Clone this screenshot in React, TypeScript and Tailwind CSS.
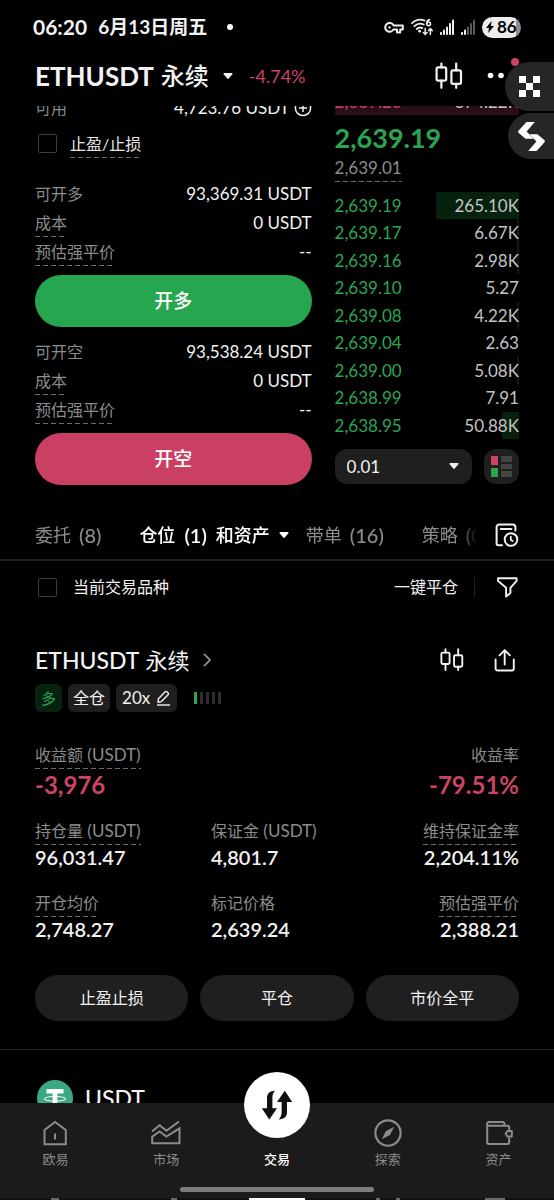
import { useState } from "react";
import type { ReactNode } from "react";
import clsx from "clsx";

interface Bid {
  price: string;
  size: string;
  depth: number;
}

const bids: Bid[] = [
  { price: "2,639.19", size: "265.10K", depth: 45 },
  { price: "2,639.17", size: "6.67K", depth: 1 },
  { price: "2,639.16", size: "2.98K", depth: 1 },
  { price: "2,639.10", size: "5.27", depth: 0 },
  { price: "2,639.08", size: "4.22K", depth: 1 },
  { price: "2,639.04", size: "2.63", depth: 0 },
  { price: "2,639.00", size: "5.08K", depth: 1 },
  { price: "2,638.99", size: "7.91", depth: 0 },
  { price: "2,638.95", size: "50.88K", depth: 9 },
];

function Caret({ className }: { className?: string }) {
  return (
    <svg viewBox="0 0 10 6" className={clsx("h-1.5 w-2.5 shrink-0 fill-current", className)} aria-hidden="true">
      <path d="M1.2 0h7.6c.7 0 1 .7.6 1.2L5.7 5.6a.9.9 0 0 1-1.4 0L.6 1.2C.2.7.5 0 1.2 0Z" />
    </svg>
  );
}

function CandlesIcon({ className }: { className?: string }) {
  return (
    <svg viewBox="0 0 28 28" className={className} fill="none" stroke="currentColor" strokeWidth="2.2" strokeLinecap="round" aria-hidden="true">
      <rect x="1.6" y="5.4" width="9.6" height="13.2" rx="1.6" />
      <path d="M6.4 1.5v4M6.4 18.6v7.2" />
      <rect x="16.4" y="8.4" width="9.6" height="13.4" rx="1.6" />
      <path d="M21.2 1.5v7M21.2 21.8v4" />
    </svg>
  );
}

/* Label with the dashed "tap for explanation" underline */
function Term({ children, plain, className }: { children: ReactNode; plain?: boolean; className?: string }) {
  return (
    <span
      className={clsx(
        "inline-block whitespace-nowrap pb-0.5 text-base leading-6",
        !plain &&
          "bg-[linear-gradient(90deg,#6c6c6c_5px,transparent_5px)] bg-[length:8px_1px] bg-[position:left_bottom] bg-repeat-x",
        className ?? "text-[#8c8c8c]",
      )}
    >
      {children}
    </span>
  );
}

function StatusBar() {
  return (
    <div className="flex h-[54px] items-center px-[33px] font-bold">
      <span className="text-[21px]">06:20</span>
      <span className="ml-[11px] text-[19px]">6月13日周五</span>
      <span className="ml-5 size-1.5 rounded-full bg-white" />
      <div className="ml-auto flex items-center gap-[7px]">
        {/* vpn key */}
        <svg viewBox="0 0 20 13" className="h-[13px] w-5" fill="none" stroke="#eee" strokeWidth="2" strokeLinejoin="round" aria-hidden="true">
          <path d="M9.5 4.4A4.4 4.4 0 1 0 9.5 8.4H13v3h3.2v-3h2.6v-4Z" />
          <circle cx="5.6" cy="6.4" r="1.2" fill="#eee" stroke="none" />
        </svg>
        {/* wifi 6 */}
        <svg viewBox="0 0 22 18" className="h-[18px] w-[22px]" fill="none" stroke="#eee" strokeWidth="1.8" strokeLinecap="round" aria-hidden="true">
          <path d="M1 5.2C4.300 1.800 9.500.8 13.500 2.600M3.400 8.200c2.500-2.500 6.200-3.200 9.300-1.700M5.800 11c1.500-1.500 3.700-1.900 5.500-.9" />
          <circle cx="8.600" cy="13.200" r="1.400" fill="#eee" stroke="none" />
          <path d="M18.400 1.600c-1.800.6-2.700 2-2.700 3.800" />
          <circle cx="17.600" cy="5.800" r="1.900" strokeWidth="1.500" />
          <path d="M14.200 10.500v5.500M12.400 14.500l1.800 1.900 1.800-1.900M19.400 16.400v-5.500M17.600 12.600l1.800-1.900 1.800 1.900" strokeWidth="1.500" />
        </svg>
        <svg viewBox="0 0 14 16" className="h-4 w-3.5" fill="#eee" aria-hidden="true">
          <rect y="13" width="2" height="3" rx=".8" />
          <rect x="3" y="10.500" width="2" height="5.500" rx=".8" />
          <rect x="6" y="7.500" width="2" height="8.500" rx=".8" />
          <rect x="9" y="4" width="2" height="12" rx=".8" />
          <rect x="12" y="0.500" width="2" height="15.500" rx=".8" />
        </svg>
        <svg viewBox="0 0 14 16" className="h-4 w-3.5" fill="#5c5c5c" aria-hidden="true">
          <rect y="13" width="2" height="3" rx=".8" fill="#eee" />
          <rect x="3" y="10.500" width="2" height="5.500" rx=".8" fill="#eee" />
          <rect x="6" y="7.500" width="2" height="8.500" rx=".8" />
          <rect x="9" y="4" width="2" height="12" rx=".8" />
          <rect x="12" y="0.500" width="2" height="15.500" rx=".8" />
        </svg>
        <span className="flex h-[21px] w-[39px] items-center gap-[3px] rounded-full bg-[linear-gradient(90deg,#ececec_86%,#8e8e8e_86%)] pl-1 text-black">
          <svg viewBox="0 0 8 12" className="h-3 w-2 shrink-0 fill-black" aria-hidden="true">
            <path d="M5.600 0 0 6.900h3L2.200 12 8 4.900H4.900Z" />
          </svg>
          <span className="text-[17px] leading-5">86</span>
        </span>
      </div>
    </div>
  );
}

function Header() {
  return (
    <header className="shrink-0">
      <StatusBar />
      <div className="flex h-[52px] items-center px-[35px] pb-2">
        <button className="flex items-center gap-[7px] whitespace-nowrap">
          <span className="text-[26px] font-bold">ETHUSDT</span>
          <span className="text-2xl font-medium">永续</span>
          <Caret className="ml-[7px]" />
        </button>
        <span className="ml-4 text-lg text-[#cb4467]">-4.74%</span>
        <button aria-label="K线" className="ml-auto">
          <CandlesIcon className="size-7" />
        </button>
        <button aria-label="更多" className="relative ml-6">
          <svg viewBox="0 0 32 28" className="h-7 w-8 fill-white" aria-hidden="true">
            <circle cx="3.500" cy="13.500" r="2.800" />
            <circle cx="14" cy="13.500" r="2.800" />
            <circle cx="24.500" cy="13.500" r="2.800" />
          </svg>
          <span className="absolute -top-1 right-0 size-2 rounded-full bg-[#cb4467]" />
        </button>
      </div>
    </header>
  );
}

/* Max size / cost / liquidation price rows plus the order button below them */
function OrderSide({ title, max, action, color }: { title: string; max: string; action: string; color: string }) {
  return (
    <section className="flex flex-col">
      <div className="flex h-[29px] items-start justify-between">
        <Term plain>{title}</Term>
        <span className="text-[17px] leading-6">{max}</span>
      </div>
      <div className="flex h-[29px] items-start justify-between">
        <Term>成本</Term>
        <span className="text-[17px] leading-6">0 USDT</span>
      </div>
      <div className="flex h-[29px] items-start justify-between">
        <Term>预估强平价</Term>
        <span className="text-[17px] leading-6">--</span>
      </div>
      <button className={clsx("mt-1.5 h-[52px] rounded-full text-[19px] font-medium text-white", color)}>{action}</button>
    </section>
  );
}

function OrderForm() {
  return (
    <div className="flex flex-col pt-2">
      <div className="flex items-center justify-between text-[17px] leading-6">
        <span className="text-base leading-6 text-[#8c8c8c]">可用</span>
        <span className="flex items-center gap-1">
          4,723.76 USDT
          <svg viewBox="0 0 18 18" className="size-[18px]" fill="none" stroke="currentColor" strokeWidth="1.5" aria-hidden="true">
            <circle cx="9" cy="9" r="7.600" />
            <path d="M9 5v8M5 9h8" />
          </svg>
        </span>
      </div>
      <label className="mt-3 flex items-start gap-[13px] pl-[3px]">
        <input type="checkbox" className="mt-0.5 size-[19px] appearance-none rounded-xs border border-[#3d3d3d] checked:bg-[#3d3d3d]" />
        <Term className="text-[#e6e6e6]">止盈/止损</Term>
      </label>
      <div className="mt-6 flex flex-col gap-[13px]">
        <OrderSide title="可开多" max="93,369.31 USDT" action="开多" color="bg-[#27a650]" />
        <OrderSide title="可开空" max="93,538.24 USDT" action="开空" color="bg-[#ca3f64]" />
      </div>
    </div>
  );
}

function OrderBook() {
  return (
    <div className="flex flex-col text-[17px]">
      <div className="flex h-[27px] items-center justify-between bg-[#2b0d17]">
        <span className="text-[#cb4467]">2,639.20</span>
        <span className="text-[#c4c4c4]">874.22K</span>
      </div>
      <div className="mt-[7px] text-[27px] font-bold leading-8 text-[#2aa653]">2,639.19</div>
      <div className="mt-0.5 flex">
        <Term className="text-[#8c8c8c]">
          <span className="text-[17px]">2,639.01</span>
        </Term>
      </div>
      <ul className="mt-2.5 grid h-[247px] grid-rows-9">
        {bids.map((bid) => (
          <li key={bid.price} className="relative flex items-center justify-between">
            <span className="absolute inset-y-0 right-0 bg-[#07210f]" style={{ width: `${bid.depth}%` }} />
            <span className="text-[#2aa653]">{bid.price}</span>
            <span className="relative text-[#c4c4c4]">{bid.size}</span>
          </li>
        ))}
      </ul>
      <div className="mt-2.5 flex gap-3">
        <div className="relative flex-1">
          <select aria-label="价格精度" className="h-[35px] w-full appearance-none rounded-xl bg-[#1f1f1f] px-3 text-[17px]">
            <option>0.01</option>
            <option>0.1</option>
            <option>1</option>
          </select>
          <Caret className="pointer-events-none absolute right-[13px] top-3.5" />
        </div>
        <button aria-label="盘口显示" className="flex size-[35px] items-center justify-center rounded-xl bg-[#1f1f1f]">
          <svg viewBox="0 0 21 21" className="size-[21px]" aria-hidden="true">
            <path fill="#cb4467" d="M0 0h7v9H0z" />
            <path fill="#2aa653" d="M0 12h7v9H0z" />
            <path fill="#444" d="M10 0h11v6H10zM10 8h11v5H10zM10 15h11v6H10z" />
          </svg>
        </button>
      </div>
    </div>
  );
}

function Tabs() {
  return (
    <div className="mt-[25px] flex h-[51px] items-center border-b-2 border-[#1f1f1f] px-[35px]">
      <div className="flex min-w-0 flex-1 overflow-hidden whitespace-nowrap text-lg text-[#8c8c8c] [mask-image:linear-gradient(90deg,#000_96%,transparent)]">
        <button className="mr-[38px] flex shrink-0 items-center gap-2">
          委托 <span className="text-xl font-medium">(8)</span>
        </button>
        <button className="mr-[17px] flex shrink-0 items-center gap-[9px] font-medium text-white">
          仓位 <span className="text-xl font-semibold">(1)</span> 和资产
          <Caret />
        </button>
        <button className="mr-[38px] flex shrink-0 items-center gap-2">
          带单 <span className="text-xl font-medium">(16)</span>
        </button>
        <button className="flex shrink-0 items-center gap-2">
          策略 <span className="text-xl font-medium">(0)</span>
        </button>
      </div>
      <button aria-label="历史记录" className="ml-[18px]">
        <svg viewBox="0 0 24 24" className="size-6" fill="none" stroke="currentColor" strokeWidth="2" strokeLinecap="round" strokeLinejoin="round" aria-hidden="true">
          <path d="M7 22.200H3.200a1.600 1.600 0 0 1-1.600-1.600V4A2.600 2.600 0 0 1 4.200 1.400h13.600A2.600 2.600 0 0 1 20.400 4v3.600" />
          <path d="M5.800 6h10.600" />
          <circle cx="16" cy="16.500" r="6.300" />
          <path d="M15.800 13.500v3.400l2 1.100" strokeWidth="1.700" />
        </svg>
      </button>
    </div>
  );
}

function FilterRow() {
  const [onlyCurrent, setOnlyCurrent] = useState(false);
  return (
    <div className="flex h-[52px] items-center pl-[38px] pr-[35px] text-base">
      <label className="flex items-center gap-4">
        <input
          type="checkbox"
          checked={onlyCurrent}
          onChange={(e) => setOnlyCurrent(e.target.checked)}
          className="size-[19px] appearance-none rounded-xs border border-[#3d3d3d] checked:bg-[#3d3d3d]"
        />
        当前交易品种
      </label>
      <button className="ml-auto">一键平仓</button>
      <span className="ml-4 h-5 w-px bg-[#222]" />
      <button aria-label="筛选" className="ml-5">
        <svg viewBox="0 0 24 24" className="size-6" fill="none" stroke="currentColor" strokeWidth="1.900" strokeLinejoin="round" aria-hidden="true">
          <path d="M3 3.300h18.600v2.600l-6.200 6.900v5.300l-4.300 3.300v-8.600L3 5.900Z" />
        </svg>
      </button>
    </div>
  );
}

function Stat({ label, unit, value, plain, right, large }: { label: string; unit?: boolean; value: string; plain?: boolean; right?: boolean; large?: boolean }) {
  return (
    <div className={clsx("flex flex-col", right ? "items-end" : "items-start")}>
      <Term plain={plain}>
        {label}
        {unit && <span className="text-[17px]"> (USDT)</span>}
      </Term>
      <span className={large ? "text-2xl font-bold leading-8 text-[#cb4467]" : "text-xl font-semibold leading-6"}>{value}</span>
    </div>
  );
}

function PositionCard() {
  return (
    <article className="px-[35px] pt-[31px]">
      <div className="flex h-8 items-center pr-[3px]">
        <button className="flex items-center gap-1.5 whitespace-nowrap">
          <span className="text-[23px] font-medium">ETHUSDT</span>
          <span className="text-[22px]">永续</span>
          <svg viewBox="0 0 8 14" className="ml-2 h-3.5 w-2" fill="none" stroke="#999" strokeWidth="1.700" aria-hidden="true">
            <path d="m1 1 6 6-6 6" />
          </svg>
        </button>
        <button aria-label="K线" className="ml-auto">
          <CandlesIcon className="size-6" />
        </button>
        <button aria-label="分享" className="ml-[30px]">
          <svg viewBox="0 0 22 24" className="h-6 w-[22px]" fill="none" stroke="currentColor" strokeWidth="1.900" strokeLinecap="round" strokeLinejoin="round" aria-hidden="true">
            <path d="M1.600 11.500v9a2 2 0 0 0 2 2h14.200a2 2 0 0 0 2-2v-9" />
            <path d="M10.700 16.500V2.200M5.500 7.300l5.200-5.200 5.200 5.200" />
          </svg>
        </button>
      </div>
      <div className="mt-2 flex items-center text-base leading-7">
        <span className="rounded-md bg-[#07210f] px-1.5 text-[15px] leading-7 text-[#2aa653]">多</span>
        <span className="ml-1.5 rounded-md bg-[#1f1f1f] px-[5px]">全仓</span>
        <button className="ml-1.5 flex items-center gap-1.5 rounded-md bg-[#1f1f1f] px-1.5 text-[17px] leading-7">
          20x
          <svg viewBox="0 0 15 16" className="h-4 w-[15px]" fill="none" stroke="currentColor" strokeWidth="1.400" strokeLinejoin="round" aria-hidden="true">
            <path d="M2 12.200 2.400 8.800 9.200 1.800a1.200 1.200 0 0 1 1.700 0l1.200 1.200a1.200 1.200 0 0 1 0 1.700L5.400 11.600Z" />
            <path d="M1 15h13" />
          </svg>
        </button>
        <span className="ml-[17px] flex gap-[3px]" role="img" aria-label="风险等级">
          <i className="h-3 w-[3px] bg-[#2aa653]" />
          <i className="h-3 w-[3px] bg-[#2e2e2e]" />
          <i className="h-3 w-[3px] bg-[#2e2e2e]" />
          <i className="h-3 w-[3px] bg-[#2e2e2e]" />
          <i className="h-3 w-[3px] bg-[#2e2e2e]" />
        </span>
      </div>
      <div className="mt-[31px] flex justify-between">
        <Stat large label="收益额" unit value="-3,976" />
        <Stat large plain right label="收益率" value="-79.51%" />
      </div>
      <div className="mt-[18px] grid grid-cols-[4fr_4fr_3fr] gap-y-[22px]">
        <Stat label="持仓量" unit value="96,031.47" />
        <Stat plain label="保证金" unit value="4,801.7" />
        <Stat right label="维持保证金率" value="2,204.11%" />
        <Stat label="开仓均价" value="2,748.27" />
        <Stat plain label="标记价格" value="2,639.24" />
        <Stat right label="预估强平价" value="2,388.21" />
      </div>
      <div className="mt-[34px] grid grid-cols-3 gap-3 text-base">
        <button className="h-[46px] rounded-full bg-[#1f1f1f]">止盈止损</button>
        <button className="h-[46px] rounded-full bg-[#1f1f1f]">平仓</button>
        <button className="h-[46px] rounded-full bg-[#1f1f1f]">市价全平</button>
      </div>
    </article>
  );
}

function AssetRow() {
  return (
    <div className="mt-7 flex items-center gap-3 border-t border-[#1f1f1f] px-[37px] pt-[30px] text-[23px] font-medium">
      <svg viewBox="0 0 36 36" className="size-9" aria-hidden="true">
        <circle cx="18" cy="18" r="18" fill="#3aa882" />
        <path fill="#fff" d="M9.500 9h17v4.600h-6.100V28h-4.800V13.600H9.500z" />
        <ellipse cx="18" cy="18.800" rx="10.800" ry="2.300" fill="none" stroke="#fff" strokeWidth="1" />
      </svg>
      USDT
    </div>
  );
}

function NavItem({ label, active, children }: { label: string; active?: boolean; children: ReactNode }) {
  return (
    <a href="#" className={clsx("relative flex flex-col items-center pt-4", active ? "font-medium text-white" : "text-[#8c8c8c]")}>
      <span className="flex h-7 items-center">{children}</span>
      <span className="mt-0.5 text-[13px] leading-5">{label}</span>
    </a>
  );
}

function BottomNav() {
  return (
    <nav className="flex h-[97px] shrink-0 flex-col bg-[#1b1b1b]">
      <div className="grid grid-cols-5">
        <NavItem label="欧易">
          <svg viewBox="0 0 26 26" className="size-[26px]" fill="none" stroke="currentColor" strokeWidth="2" aria-hidden="true">
            <path d="M2.500 10 13 2l10.800 8v14.200H2.500Z" />
            <path d="M13 13.500v6" />
          </svg>
        </NavItem>
        <NavItem label="市场">
          <svg viewBox="0 0 30 26" className="h-[26px] w-[30px]" fill="none" stroke="currentColor" strokeWidth="2" aria-hidden="true">
            <path d="M1 11.500 8.600 5.200l6.800 5.600L28 1.500" />
            <path d="M1.200 23.300v-6.500l7.400-5.400 6.800 5.200L28.500 8.300v15Z" />
          </svg>
        </NavItem>
        <NavItem label="交易" active>
          <span className="absolute -top-[31px] left-1/2 flex size-[66px] -translate-x-1/2 items-center justify-center rounded-full bg-white">
            <svg viewBox="0 0 32 30" className="h-[30px] w-8 fill-[#111]" aria-hidden="true">
              <path d="M14 .8C8.800 1 6 3.600 6 8v10.200H.8L8.300 29.500 16 18.200h-4.600V8.200C11.400 5 12 3 14 .8Z" />
              <path d="M17.800 29.500c5.200-.2 8.200-2.800 8.200-7.200V12.100h5.200L23.800.8 16 12.100h4.600v10c0 3.200-.8 5.200-2.800 7.400Z" />
            </svg>
          </span>
        </NavItem>
        <NavItem label="探索">
          <svg viewBox="0 0 28 28" className="size-7" fill="none" stroke="currentColor" strokeWidth="2.200" aria-hidden="true">
            <circle cx="14" cy="14" r="12.600" />
            <path d="m20.200 7.800-4.200 8.200-8.200 4.200L12 12Z" fill="currentColor" stroke="none" />
          </svg>
        </NavItem>
        <NavItem label="资产">
          <svg viewBox="0 0 28 26" className="h-[26px] w-7" fill="none" stroke="currentColor" strokeWidth="2" strokeLinejoin="round" aria-hidden="true">
            <path d="M24.200 10V7.300a1.600 1.600 0 0 0-1.600-1.600H2.200v16.500a1.800 1.800 0 0 0 1.800 1.800h18.400a1.800 1.800 0 0 0 1.800-1.800V17.500" />
            <path d="M2.200 5.700V3.600c0-1 .7-1.600 1.600-1.600h13.900c1 0 1.700.7 1.700 1.600v2.100" />
            <path d="M26.800 11h-4.300l-1.900 2.800 1.900 2.800h4.300Z" />
          </svg>
        </NavItem>
      </div>
      <div className="mx-auto mt-[18px] h-[5px] w-[194px] shrink-0 rounded-full bg-[#7b7b7b]" />
      <div className="mt-auto grid h-0.5 grid-cols-5 justify-items-center bg-[#111]">
        <span className="w-2 bg-[#6a6a6a]" />
        <span className="ml-4 w-1.5 bg-[#6a6a6a]" />
        <span className="w-14 bg-white" />
        <span className="w-6 border-x-4 border-[#6a6a6a]" />
        <span className="mr-2 w-5 bg-[#6a6a6a]" />
      </div>
    </nav>
  );
}

/* Shortcuts docked to the screen edge */
function EdgeDock() {
  return (
    <div className="absolute right-0 top-[62px] flex flex-col items-end gap-0.5">
      <button aria-label="欧易" className="flex h-[49px] w-[49px] items-center rounded-l-full bg-[#262626] pl-3.5">
        <svg viewBox="0 0 21 21" className="size-[21px] fill-white" aria-hidden="true">
          <path d="M0 0h7v7H0zM14 0h7v7h-7zM7 7h7v7H7zM0 14h7v7H0zM14 14h7v7h-7z" />
        </svg>
      </button>
      <button aria-label="Bitget" className="flex h-[46px] w-[46px] items-center rounded-l-full bg-[#262626] pl-2.5">
        <svg viewBox="0 0 27 29" className="h-[29px] w-[27px] fill-white" aria-hidden="true">
          <path d="M8.500 0h8.300L8.600 9.600l7 7.200H7.600L.7 10.900a1.600 1.600 0 0 1 0-2.300Z" />
          <path d="M18.500 29h-8.300l8.200-9.600-7-7.200h8l6.900 5.900a1.600 1.600 0 0 1 0 2.300Z" />
        </svg>
      </button>
    </div>
  );
}

export default function App() {
  return (
    <div className="relative flex h-screen flex-col overflow-hidden bg-black font-['Lato','Noto_Sans_CJK_SC',sans-serif] text-[#f2f2f2]">
      <Header />
      <main className="min-h-0 flex-1 overflow-hidden">
        <div className="-mt-[18px] grid grid-cols-[3fr_2fr] gap-[23px] px-[35px]">
          <OrderForm />
          <OrderBook />
        </div>
        <Tabs />
        <FilterRow />
        <PositionCard />
        <AssetRow />
      </main>
      <BottomNav />
      <EdgeDock />
    </div>
  );
}
